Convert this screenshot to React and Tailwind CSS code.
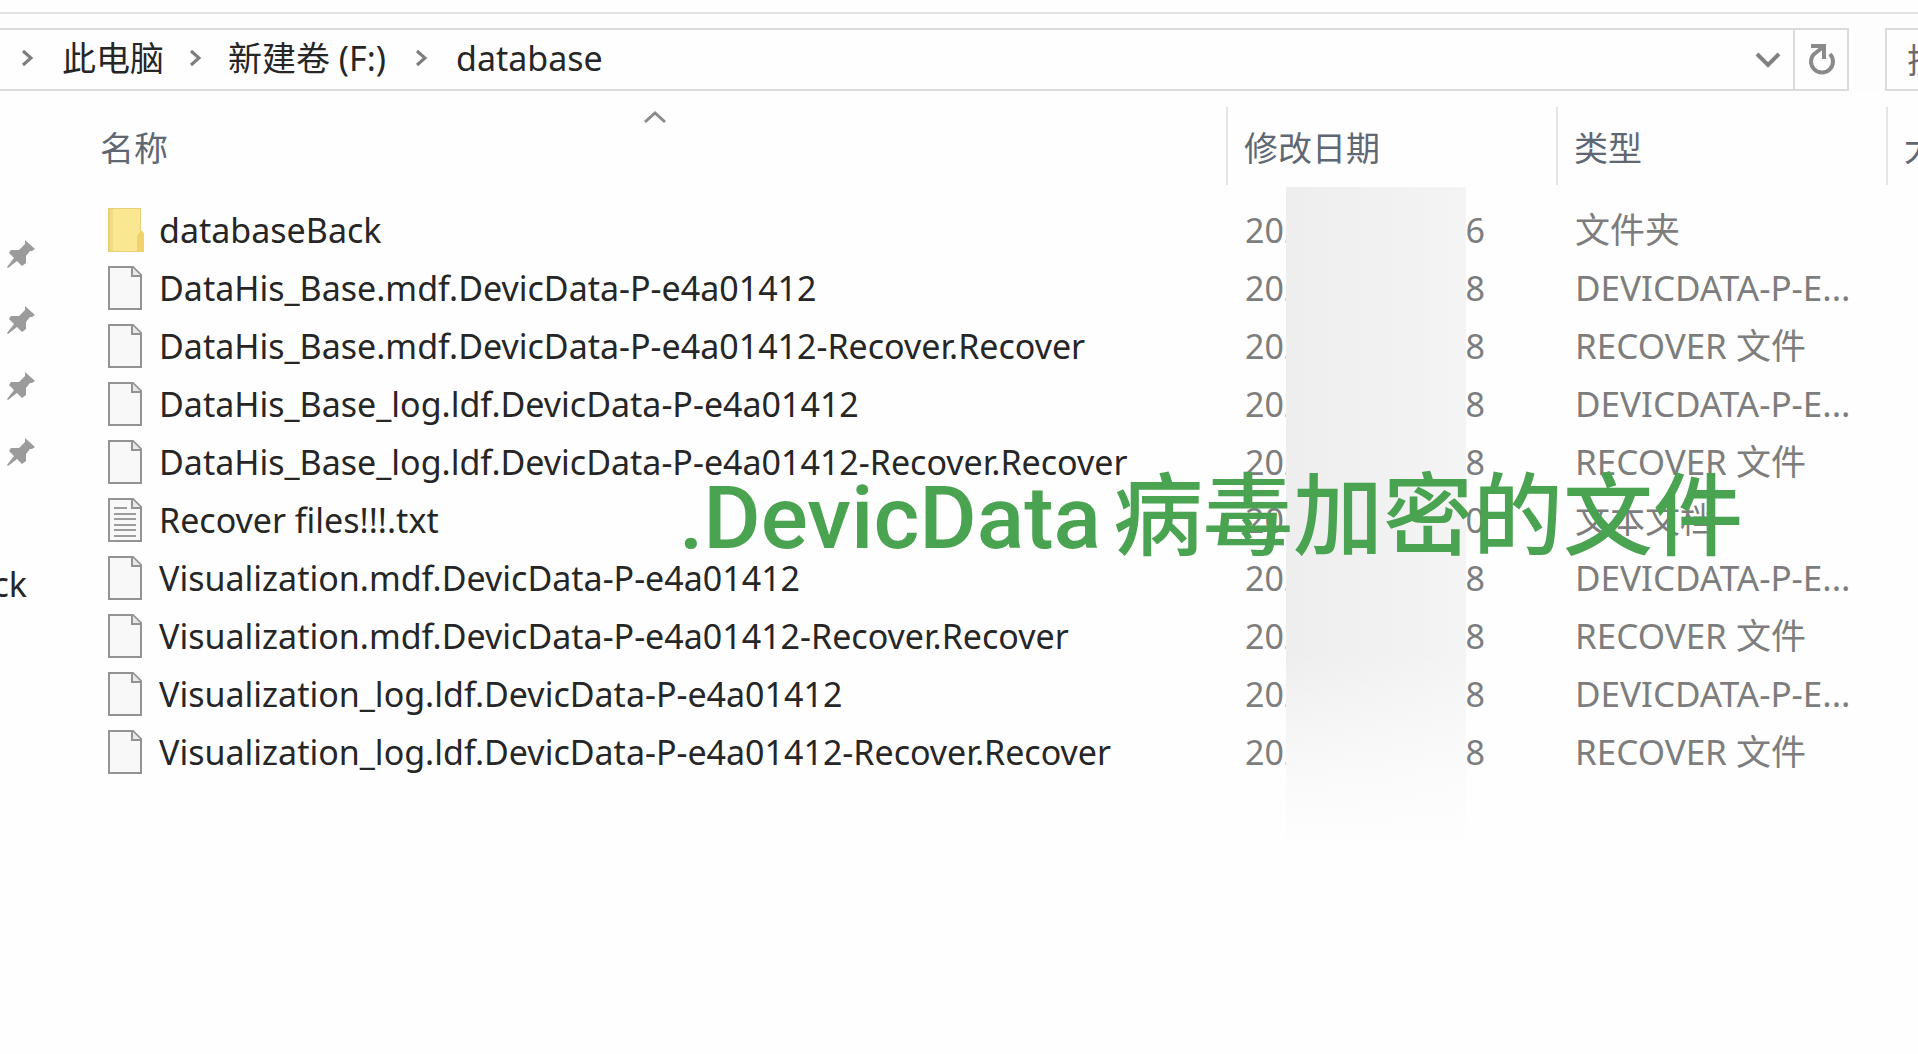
import { useState } from 'react'

const FILES = [
    { name: 'databaseBack', kind: 'folder', minute: '6', type: '文件夹' },
    { name: 'DataHis_Base.mdf.DevicData-P-e4a01412', kind: 'file', minute: '8', type: 'DEVICDATA-P-E...' },
    { name: 'DataHis_Base.mdf.DevicData-P-e4a01412-Recover.Recover', kind: 'file', minute: '8', type: 'RECOVER 文件' },
    { name: 'DataHis_Base_log.ldf.DevicData-P-e4a01412', kind: 'file', minute: '8', type: 'DEVICDATA-P-E...' },
    { name: 'DataHis_Base_log.ldf.DevicData-P-e4a01412-Recover.Recover', kind: 'file', minute: '8', type: 'RECOVER 文件' },
    { name: 'Recover files!!!.txt', kind: 'text', minute: '0', type: '文本文档' },
    { name: 'Visualization.mdf.DevicData-P-e4a01412', kind: 'file', minute: '8', type: 'DEVICDATA-P-E...' },
    { name: 'Visualization.mdf.DevicData-P-e4a01412-Recover.Recover', kind: 'file', minute: '8', type: 'RECOVER 文件' },
    { name: 'Visualization_log.ldf.DevicData-P-e4a01412', kind: 'file', minute: '8', type: 'DEVICDATA-P-E...' },
    { name: 'Visualization_log.ldf.DevicData-P-e4a01412-Recover.Recover', kind: 'file', minute: '8', type: 'RECOVER 文件' },
]

function FolderIcon() {
    return (
        <svg width="38" height="44" viewBox="0 0 38 44" className="shrink-0">
            <path d="M1 0h33v44H1z" fill="#e6cf74" />
            <path d="M6 1h27v42H6z" fill="#fae792" />
            <path d="M3 1h3v42H3z" fill="#f1dc86" />
            <path d="M30 28l4-6 3 3v19h-7z" fill="#f0d46b" />
        </svg>
    )
}

function FileIcon({ lined }) {
    return (
        <svg width="38" height="44" viewBox="0 0 38 44" className="shrink-0">
            <path d="M2 1h24l8 8v34H2z" fill="#f8f8f8" stroke="#939393" strokeWidth="2" />
            <path d="M25 1v9h9" fill="#e8e8e8" stroke="#939393" strokeWidth="2" />
            {lined && <path d="M7 10h13M7 16h22M7 21h22M7 27h22M7 32h22M7 38h22" stroke="#9c9c9c" strokeWidth="2" />}
        </svg>
    )
}

function PinIcon() {
    return (
        <svg width="28" height="28" viewBox="0 0 28 28">
            <path d="M18 0l10 9-3 2-2 0-4 5v7l-4 3-5-5-9 7-1-1 7-9-5-5 2-3h8l6-6z" fill="#9b9b9b" />
        </svg>
    )
}

function Chevron() {
    return (
        <svg width="14" height="18" viewBox="0 0 14 18" fill="none" className="shrink-0">
            <path d="M3 2l8 7-8 7" stroke="#7c7c7c" strokeWidth="3" />
        </svg>
    )
}

export default function App() {
    const [query, setQuery] = useState('')

    return (
        <div className="relative min-h-screen overflow-hidden bg-[#fefefe] font-['Noto_Sans','Noto_Sans_CJK_SC',sans-serif] text-[34px] text-[#262626]">
            <div className="h-[14px] border-b-2 border-[#e3e2e3]" />

            <div className="flex h-[77px] bg-[#fdfdfd] pt-[14px]">
                <div className="flex h-[63px] grow border-y-2 border-r-2 border-[#dcdbdc] bg-[#fefefe]">
                    <nav className="flex grow items-center pb-1 pl-5 leading-[40px]">
                        <Chevron />
                        <a href="#pc" className="ml-7">此电脑</a>
                        <span className="ml-6"><Chevron /></span>
                        <a href="#volume" className="ml-[26px]">新建卷 (F:)</a>
                        <span className="ml-7"><Chevron /></span>
                        <a href="#database" className="ml-7">database</a>
                    </nav>
                    <button aria-label="Recent locations" className="flex w-[50px] items-center justify-center">
                        <svg width="26" height="18" viewBox="0 0 26 18" fill="none">
                            <path d="M2 3l11 11L24 3" stroke="#808080" strokeWidth="4" />
                        </svg>
                    </button>
                    <button aria-label="Refresh" className="flex w-[54px] items-center justify-center border-l-2 border-[#dcdbdc]">
                        <svg width="30" height="34" viewBox="0 0 30 34" fill="none">
                            <path d="M8 11a11 11 0 1 0 16 0" stroke="#8a8a8a" strokeWidth="4" />
                            <path d="M5 3h13v13M7 12L17 4" stroke="#8a8a8a" strokeWidth="4" />
                        </svg>
                    </button>
                </div>
                <div className="ml-9 h-[63px] w-[33px] shrink-0 overflow-hidden border-y-2 border-l-2 border-[#dcdbdc] bg-[#fefefe]">
                    <input
                        aria-label="搜索"
                        placeholder="搜索"
                        value={query}
                        onChange={e => setQuery(e.target.value)}
                        className="h-full w-full pl-[20px] outline-none placeholder:text-[#6a6a6a]"
                    />
                </div>
            </div>

            <div className="flex pt-4">
                <aside className="w-[100px] shrink-0 pt-[114px]">
                    <ul>
                        {[0, 1, 2, 3].map(i => (
                            <li key={i} className="flex h-[66px] items-center pl-[7px]"><PinIcon /></li>
                        ))}
                        <li className="h-[66px]" />
                        <li className="flex h-[66px] w-[27px] items-center justify-end overflow-hidden">Back</li>
                    </ul>
                </aside>

                <div className="relative min-w-0 grow">
                    <table className="w-full table-fixed border-collapse text-left">
                        <colgroup>
                            <col />
                            <col className="w-[330px]" />
                            <col className="w-[330px]" />
                            <col className="w-[31px]" />
                        </colgroup>
                        <thead className="text-[#5f6872]">
                            <tr className="h-[78px]">
                                <th className="relative p-0 pt-1 font-normal">
                                    名称
                                    <svg width="24" height="16" viewBox="0 0 24 16" fill="none" className="absolute top-0.5 left-1/2 -translate-x-5">
                                        <path d="M2 13l10-9 10 9" stroke="#8a8a8a" strokeWidth="3" />
                                    </svg>
                                </th>
                                <th className="border-l-2 border-[#e6e6e6] p-0 pt-1 pl-4 font-normal">修改日期</th>
                                <th className="border-l-2 border-[#e6e6e6] p-0 pt-1 pl-4 font-normal">类型</th>
                                <th className="overflow-hidden border-l-2 border-[#e6e6e6] p-0 pt-1 pl-4 font-normal whitespace-nowrap">大小</th>
                            </tr>
                            <tr className="h-4" />
                        </thead>
                        <tbody className="text-[#7d7d7d]">
                            {FILES.map(file => (
                                <tr key={file.name} className="h-[58px]">
                                    <td className="p-0 text-[#262626]">
                                        <div className="flex items-center gap-[14px] pl-[7px] leading-[40px] whitespace-nowrap">
                                            {file.kind === 'folder' ? <FolderIcon /> : <FileIcon lined={file.kind === 'text'} />}
                                            {file.name}
                                        </div>
                                    </td>
                                    <td className="p-0 pl-[18px]">
                                        <div className="flex w-[240px] justify-between leading-[40px]">
                                            <span>202</span>
                                            <span>{file.minute}</span>
                                        </div>
                                    </td>
                                    <td className="p-0 pl-[18px] text-[35px] leading-[40px] whitespace-nowrap">{file.type}</td>
                                    <td />
                                </tr>
                            ))}
                        </tbody>
                    </table>
                    {/* smudge that hides the middle of the dates */}
                    <div className="absolute top-20 right-[452px] h-[665px] w-[180px] bg-linear-to-r from-[#eeeeee] to-[#f4f4f4]">
                        <div className="h-full bg-linear-to-b from-transparent from-70% via-[#fefefe]/70 via-88% to-[#fefefe]" />
                    </div>
                </div>
            </div>

            <p className="absolute top-[444px] right-[175px] flex items-baseline gap-3 text-[90px] leading-[130px] font-medium whitespace-nowrap text-[#4aa350]">
                <span className="font-['Roboto',sans-serif] text-[88px]">.DevicData</span>
                <span className="font-['Noto_Sans_CJK_SC',sans-serif]">病毒加密的文件</span>
            </p>
        </div>
    )
}
